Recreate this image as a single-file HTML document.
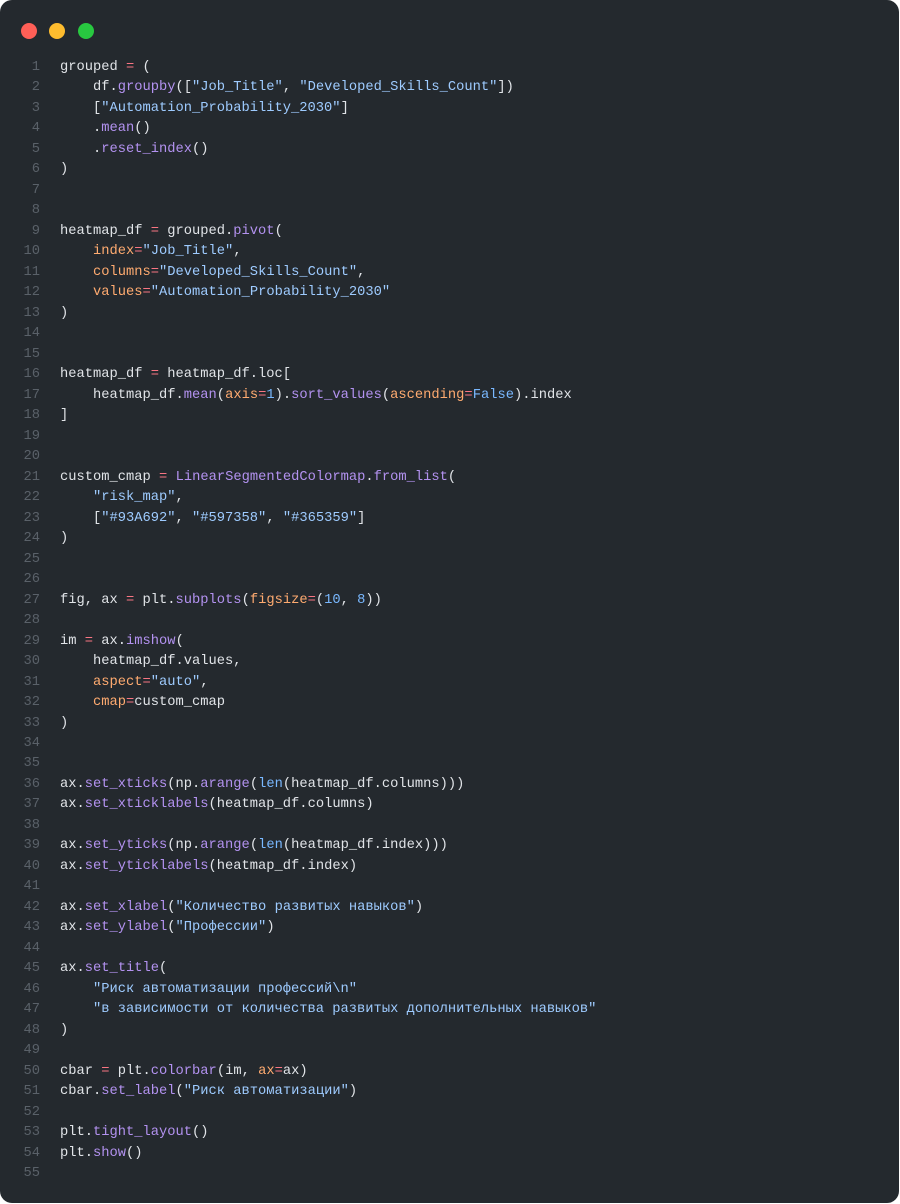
<!DOCTYPE html>
<html><head><meta charset="utf-8"><style>
html,body{margin:0;padding:0;background:#fff;width:900px;height:1204px;overflow:hidden}
.win{position:absolute;left:0;top:0;width:899px;height:1203px;background:#24292e;border-radius:12px}
.dot{position:absolute;top:23px;width:16px;height:16px;border-radius:50%}
pre{position:absolute;left:0;top:58px;margin:0;font-family:"Liberation Mono","DejaVu Sans Mono",monospace;font-size:13.75px;line-height:20.48px;color:#e1e4e8}
.ln{display:inline-block;width:40px;text-align:right;color:#5a6169;margin-right:20px}
.f{color:#b392f0}.s{color:#9ecbff}.k{color:#ffab70}.n{color:#79b8ff}.o{color:#f97583}
</style></head><body><div class="win">
<div class="dot" style="left:21px;background:#ff5f57"></div>
<div class="dot" style="left:49px;background:#febc2e"></div>
<div class="dot" style="left:78px;background:#28c840"></div>
<pre><span class="ln">1</span>grouped <span class="o">=</span> (
<span class="ln">2</span>    df.<span class="f">groupby</span>([<span class="s">"Job_Title"</span>, <span class="s">"Developed_Skills_Count"</span>])
<span class="ln">3</span>    [<span class="s">"Automation_Probability_2030"</span>]
<span class="ln">4</span>    .<span class="f">mean</span>()
<span class="ln">5</span>    .<span class="f">reset_index</span>()
<span class="ln">6</span>)
<span class="ln">7</span>
<span class="ln">8</span>
<span class="ln">9</span>heatmap_df <span class="o">=</span> grouped.<span class="f">pivot</span>(
<span class="ln">10</span>    <span class="k">index</span><span class="o">=</span><span class="s">"Job_Title"</span>,
<span class="ln">11</span>    <span class="k">columns</span><span class="o">=</span><span class="s">"Developed_Skills_Count"</span>,
<span class="ln">12</span>    <span class="k">values</span><span class="o">=</span><span class="s">"Automation_Probability_2030"</span>
<span class="ln">13</span>)
<span class="ln">14</span>
<span class="ln">15</span>
<span class="ln">16</span>heatmap_df <span class="o">=</span> heatmap_df.loc[
<span class="ln">17</span>    heatmap_df.<span class="f">mean</span>(<span class="k">axis</span><span class="o">=</span><span class="n">1</span>).<span class="f">sort_values</span>(<span class="k">ascending</span><span class="o">=</span><span class="n">False</span>).index
<span class="ln">18</span>]
<span class="ln">19</span>
<span class="ln">20</span>
<span class="ln">21</span>custom_cmap <span class="o">=</span> <span class="f">LinearSegmentedColormap</span>.<span class="f">from_list</span>(
<span class="ln">22</span>    <span class="s">"risk_map"</span>,
<span class="ln">23</span>    [<span class="s">"#93A692"</span>, <span class="s">"#597358"</span>, <span class="s">"#365359"</span>]
<span class="ln">24</span>)
<span class="ln">25</span>
<span class="ln">26</span>
<span class="ln">27</span>fig, ax <span class="o">=</span> plt.<span class="f">subplots</span>(<span class="k">figsize</span><span class="o">=</span>(<span class="n">10</span>, <span class="n">8</span>))
<span class="ln">28</span>
<span class="ln">29</span>im <span class="o">=</span> ax.<span class="f">imshow</span>(
<span class="ln">30</span>    heatmap_df.values,
<span class="ln">31</span>    <span class="k">aspect</span><span class="o">=</span><span class="s">"auto"</span>,
<span class="ln">32</span>    <span class="k">cmap</span><span class="o">=</span>custom_cmap
<span class="ln">33</span>)
<span class="ln">34</span>
<span class="ln">35</span>
<span class="ln">36</span>ax.<span class="f">set_xticks</span>(np.<span class="f">arange</span>(<span class="n">len</span>(heatmap_df.columns)))
<span class="ln">37</span>ax.<span class="f">set_xticklabels</span>(heatmap_df.columns)
<span class="ln">38</span>
<span class="ln">39</span>ax.<span class="f">set_yticks</span>(np.<span class="f">arange</span>(<span class="n">len</span>(heatmap_df.index)))
<span class="ln">40</span>ax.<span class="f">set_yticklabels</span>(heatmap_df.index)
<span class="ln">41</span>
<span class="ln">42</span>ax.<span class="f">set_xlabel</span>(<span class="s">"Количество развитых навыков"</span>)
<span class="ln">43</span>ax.<span class="f">set_ylabel</span>(<span class="s">"Профессии"</span>)
<span class="ln">44</span>
<span class="ln">45</span>ax.<span class="f">set_title</span>(
<span class="ln">46</span>    <span class="s">"Риск автоматизации профессий\n"</span>
<span class="ln">47</span>    <span class="s">"в зависимости от количества развитых дополнительных навыков"</span>
<span class="ln">48</span>)
<span class="ln">49</span>
<span class="ln">50</span>cbar <span class="o">=</span> plt.<span class="f">colorbar</span>(im, <span class="k">ax</span><span class="o">=</span>ax)
<span class="ln">51</span>cbar.<span class="f">set_label</span>(<span class="s">"Риск автоматизации"</span>)
<span class="ln">52</span>
<span class="ln">53</span>plt.<span class="f">tight_layout</span>()
<span class="ln">54</span>plt.<span class="f">show</span>()
<span class="ln">55</span></pre>
</div></body></html>
